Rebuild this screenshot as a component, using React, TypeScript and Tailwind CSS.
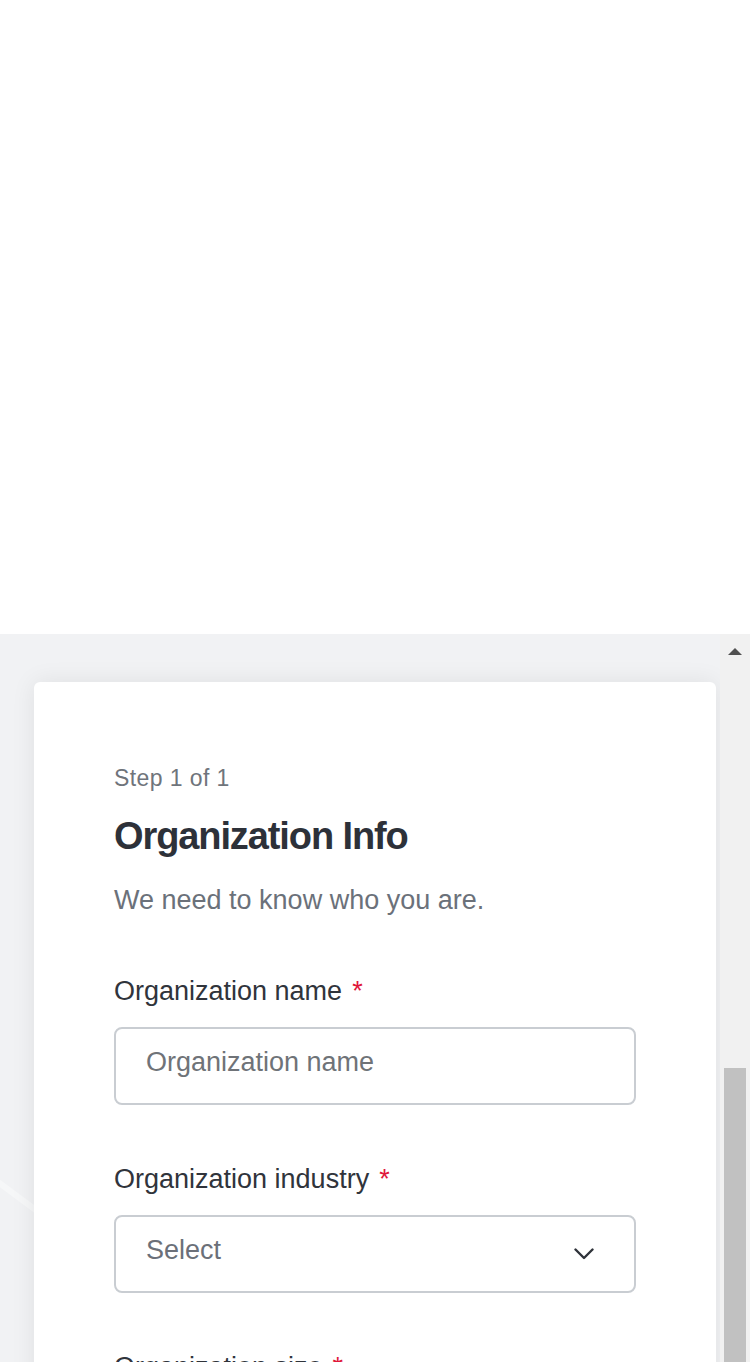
import React from "react";

function Label({ text }: { text: string }) {
  return (
    <label className="block text-[27px] leading-[36px] text-[#30343b]">
      {text}
      <span className="ml-[10px] text-[#e0173a]">*</span>
    </label>
  );
}

function Chevron() {
  return (
    <svg width="20" height="12" viewBox="0 0 20 12" fill="none" aria-hidden="true">
      <polyline
        points="1.5,1.5 10,10 18.5,1.5"
        stroke="#2f333a"
        strokeWidth="2.4"
        strokeLinecap="round"
        strokeLinejoin="round"
      />
    </svg>
  );
}

function SelectBox() {
  return (
    <div className="flex h-[78px] w-full items-center justify-between rounded-lg border-2 border-[#c9cdd2] bg-white pl-[30px] pr-[40px]">
      <span className="mb-[7px] text-[27px] text-[#6b7079]">Select</span>
      <Chevron />
    </div>
  );
}

export default function App() {
  return (
    <div className="flex h-[1362px] w-[750px] flex-col overflow-hidden bg-white font-['Liberation_Sans',Arial,sans-serif]">
      <div className="h-[634px] shrink-0 bg-white" />
      <div className="relative flex-1 overflow-hidden bg-[#f1f2f4]">
        <svg
          className="absolute left-0 top-0"
          width="750"
          height="728"
          viewBox="0 0 750 728"
          aria-hidden="true"
        >
          <line x1="-10" y1="542" x2="60" y2="594" stroke="#f6f7f8" strokeWidth="6" />
        </svg>
        <div className="relative flex justify-center pt-[48px]">
          <div className="w-[682px] rounded-md bg-white px-[80px] pb-[80px] pt-[82px] shadow-[0_0_24px_rgba(0,0,0,0.08)]">
            <p className="text-[23px] leading-[28px] tracking-[0.4px] text-[#6f747b]">Step 1 of 1</p>
            <h1 className="mt-[21px] text-[38px] font-bold leading-[46px] tracking-[-1.1px] text-[#2d3139]">
              Organization Info
            </h1>
            <p className="mt-[23px] text-[27px] leading-[36px] text-[#6b717a]">
              We need to know who you are.
            </p>
            <div className="mt-[55px] flex flex-col gap-[56px]">
              <div className="flex flex-col gap-[18px]">
                <Label text="Organization name" />
                <input
                  type="text"
                  placeholder="Organization name"
                  className="h-[78px] w-full rounded-lg border-2 border-[#c9cdd2] bg-white pb-[7px] pl-[30px] pr-[30px] text-[27px] text-[#30343b] outline-none placeholder:text-[#6f7378]"
                />
              </div>
              <div className="flex flex-col gap-[18px]">
                <Label text="Organization industry" />
                <SelectBox />
              </div>
              <div className="flex flex-col gap-[18px]">
                <Label text="Organization size" />
                <SelectBox />
              </div>
            </div>
          </div>
        </div>
        <div className="absolute bottom-0 right-0 top-0 w-[30px] bg-[#f1f1f1]">
          <div className="flex justify-center pt-[14px]">
            <div className="h-0 w-0 border-b-[7px] border-l-[7.5px] border-r-[7.5px] border-b-[#505050] border-l-transparent border-r-transparent" />
          </div>
          <div className="absolute bottom-0 left-[4px] right-[4px] top-[434px] bg-[#c1c1c1]" />
        </div>
      </div>
    </div>
  );
}
